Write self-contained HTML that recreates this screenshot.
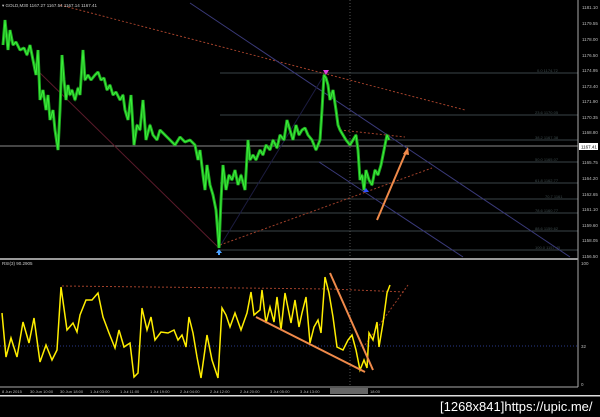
<!DOCTYPE html>
<html><head><style>
html,body{margin:0;padding:0;background:#000;}
svg{display:block;font-family:"Liberation Sans",sans-serif;}
</style></head><body>
<svg width="600" height="417" viewBox="0 0 600 417" xmlns="http://www.w3.org/2000/svg">
<rect width="600" height="417" fill="#000"/>
<g stroke="#3a4548" stroke-width="1">
<line x1="220" y1="73" x2="578" y2="73"/>
<line x1="220" y1="115" x2="578" y2="115"/>
<line x1="220" y1="140" x2="578" y2="140"/>
<line x1="220" y1="162" x2="578" y2="162"/>
<line x1="220" y1="183" x2="578" y2="183"/>
<line x1="220" y1="199" x2="578" y2="199"/>
<line x1="220" y1="213" x2="578" y2="213"/>
<line x1="220" y1="231" x2="578" y2="231"/>
<line x1="220" y1="250" x2="578" y2="250"/>
</g>
<g fill="#3c4a4c" font-size="4">
<text x="537" y="72">0.0 1174.72</text>
<text x="535" y="114">23.6 1170.05</text>
<text x="535" y="139">38.2 1167.38</text>
<text x="535" y="161">50.0 1165.07</text>
<text x="535" y="182">61.8 1162.77</text>
<text x="545" y="198">70.7 1161</text>
<text x="535" y="212">78.6 1160.77</text>
<text x="535" y="230">88.6 1159.62</text>
<text x="535" y="249">100.0 1157.45</text>
</g>
<line x1="0" y1="146" x2="578" y2="146" stroke="#8a8a8a" stroke-width="1"/>
<line x1="350" y1="0" x2="350" y2="387" stroke="#555" stroke-dasharray="1,2"/>
<line x1="60" y1="5" x2="465" y2="110" stroke="#a0402a" stroke-dasharray="2,2"/>
<line x1="190" y1="3" x2="570" y2="257" stroke="#3a3a7a"/>
<line x1="319" y1="162" x2="463" y2="257" stroke="#3a3a7a"/>
<line x1="40" y1="73" x2="219" y2="248" stroke="#5a1a2a"/>
<line x1="219" y1="248" x2="326" y2="72" stroke="#1c1c40"/>
<line x1="220" y1="245" x2="432" y2="168" stroke="#a0402a" stroke-dasharray="2,2"/>
<line x1="340" y1="130" x2="405" y2="137" stroke="#a0402a" stroke-dasharray="2,2"/>
<line x1="377" y1="220" x2="406" y2="152" stroke="#f08a4a" stroke-width="2"/>
<polygon points="408,147 403,154 409,155" fill="#f08a4a"/>
<polyline fill="none" stroke="#1faa1f" stroke-width="3" stroke-linejoin="bevel" points="3,45 5,20 8,50 10,30 13,45 16,42 20,50 24,48 27,55 30,45 33,60 36,75 38,50 40,100 43,90 46,110 48,95 50,120 53,110 55,130 58,150 60,110 62,55 64,80 66,100 68,85 70,95 72,90 75,100 78,88 80,95 83,50 85,80 88,75 91,80 95,75 98,72 101,80 104,78 107,90 110,85 113,95 116,92 120,100 123,95 125,110 128,120 131,95 134,145 137,125 140,130 143,100 146,140 150,125 153,135 157,140 160,130 165,135 170,140 175,145 180,137 185,142 190,140 195,145 198,160 200,150 203,175 205,190 207,165 210,185 213,195 216,210 219,248 221,200 223,165 226,190 229,175 232,180 235,170 238,185 241,175 245,190 248,140 250,160 253,155 256,160 260,150 263,155 266,145 270,150 273,140 277,148 280,135 284,140 287,120 290,130 293,140 296,125 299,135 302,130 305,128 308,135 312,140 316,150 320,140 322,110 324,75 326,78 328,85 330,100 333,90 336,110 338,125 340,130 343,135 346,140 350,145 353,140 356,135 358,150 360,180 362,175 364,190 366,170 369,180 372,185 375,170 378,175 381,165 384,150 387,135 389,140"/>
<polyline fill="none" stroke="#3cf03c" stroke-width="1" points="3,45 5,20 8,50 10,30 13,45 16,42 20,50 24,48 27,55 30,45 33,60 36,75 38,50 40,100 43,90 46,110 48,95 50,120 53,110 55,130 58,150 60,110 62,55 64,80 66,100 68,85 70,95 72,90 75,100 78,88 80,95 83,50 85,80 88,75 91,80 95,75 98,72 101,80 104,78 107,90 110,85 113,95 116,92 120,100 123,95 125,110 128,120 131,95 134,145 137,125 140,130 143,100 146,140 150,125 153,135 157,140 160,130 165,135 170,140 175,145 180,137 185,142 190,140 195,145 198,160 200,150 203,175 205,190 207,165 210,185 213,195 216,210 219,248 221,200 223,165 226,190 229,175 232,180 235,170 238,185 241,175 245,190 248,140 250,160 253,155 256,160 260,150 263,155 266,145 270,150 273,140 277,148 280,135 284,140 287,120 290,130 293,140 296,125 299,135 302,130 305,128 308,135 312,140 316,150 320,140 322,110 324,75 326,78 328,85 330,100 333,90 336,110 338,125 340,130 343,135 346,140 350,145 353,140 356,135 358,150 360,180 362,175 364,190 366,170 369,180 372,185 375,170 378,175 381,165 384,150 387,135 389,140"/>
<polygon points="219,249 216,253 222,253" fill="#4aa0ff"/><rect x="218" y="252" width="2" height="3" fill="#4aa0ff"/>
<polygon points="326,75 323,70 329,70" fill="#e040e0"/>
<polygon points="366,188 363,192 369,192" fill="#3050ff"/>
<text x="2" y="7" fill="#ccc" font-size="4.5">▾ GOLD,M30  1167.27 1167.54 1167.14 1167.41</text>
<line x1="578" y1="0" x2="578" y2="387" stroke="#aaa"/>
<g fill="#bbb" font-size="4.5">
<text x="582" y="9">1181.10</text><text x="582" y="25">1179.55</text><text x="582" y="41">1178.00</text><text x="582" y="57">1176.50</text><text x="582" y="72">1174.95</text><text x="582" y="88">1173.40</text><text x="582" y="103">1171.90</text><text x="582" y="119">1170.35</text><text x="582" y="134">1168.80</text><text x="582" y="164">1165.75</text><text x="582" y="180">1164.20</text><text x="582" y="196">1162.65</text><text x="582" y="211">1161.10</text><text x="582" y="227">1159.60</text><text x="582" y="242">1158.05</text><text x="582" y="258">1156.50</text>
</g>
<rect x="579" y="143" width="19" height="7" fill="#fff"/>
<text x="581" y="148.5" fill="#000" font-size="4.5">1167.41</text>
<rect x="0" y="258" width="578" height="2" fill="#999"/>
<text x="2" y="265" fill="#ccc" font-size="4.5">RSI(3) 90.2905</text>
<g fill="#bbb" font-size="4.5"><text x="581" y="265">100</text><text x="581" y="348">32</text><text x="581" y="386">0</text></g>
<line x1="0" y1="346" x2="578" y2="346" stroke="#2a3a8a" stroke-dasharray="1,2"/>
<polyline fill="none" stroke="#a0402a" stroke-dasharray="2,2" points="62,286 330,289 405,292"/>
<line x1="365" y1="345" x2="408" y2="285" stroke="#a0402a" stroke-dasharray="2,2"/>
<polyline fill="none" stroke="#ffee00" stroke-width="1.5" points="2,313 6,357 11,338 17,357 23,322 29,343 34,318 40,362 46,345 52,360 57,350 61,287 67,330 73,323 77,332 80,315 86,300 92,300 98,293 103,317 109,333 115,348 119,330 124,347 130,343 134,377 138,373 142,308 147,330 151,317 155,340 161,332 168,333 174,330 178,340 182,335 186,347 189,317 193,333 197,357 201,378 207,335 212,360 218,378 222,308 226,315 230,327 235,313 241,330 247,313 251,292 254,315 260,310 262,290 266,323 270,307 274,322 277,297 281,330 285,293 291,323 295,300 299,327 302,313 306,297 310,343 314,327 318,320 321,333 325,277 329,293 333,317 337,347 343,350 348,340 352,335 356,350 360,370 364,360 367,368 369,333 373,340 377,322 379,347 383,323 387,293 390,285"/>
<line x1="256" y1="317" x2="365" y2="372" stroke="#f08a4a" stroke-width="2"/>
<line x1="330" y1="273" x2="373" y2="370" stroke="#f08a4a" stroke-width="2"/>
<line x1="0" y1="387" x2="578" y2="387" stroke="#aaa"/>
<rect x="330" y="388" width="38" height="6" fill="#666"/>
<g fill="#bbb" font-size="4">
<text x="2" y="393">8 Jun 2015</text><text x="30" y="393">30 Jun 10:00</text><text x="60" y="393">30 Jun 18:00</text><text x="90" y="393">1 Jul 03:00</text><text x="120" y="393">1 Jul 11:00</text><text x="150" y="393">1 Jul 19:00</text><text x="180" y="393">2 Jul 04:00</text><text x="210" y="393">2 Jul 12:00</text><text x="240" y="393">2 Jul 20:00</text><text x="270" y="393">3 Jul 05:00</text><text x="300" y="393">3 Jul 13:00</text><text x="370" y="393">18:00</text>
</g>
<rect x="0" y="395" width="600" height="1.5" fill="#ddd"/>
<text x="440" y="411" fill="#fff" font-size="13">[1268x841]https://upic.me/</text>
</svg>
</body></html>
